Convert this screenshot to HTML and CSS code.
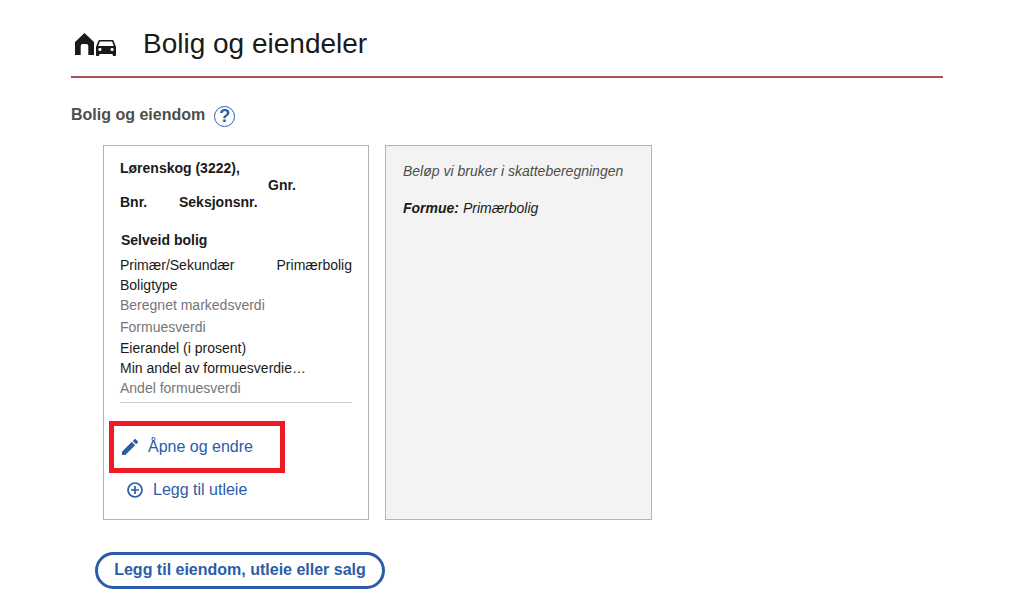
FILE: index.html
```html
<!DOCTYPE html>
<html lang="en">
<head>
    <meta charset="UTF-8">
    <title>Bolig og eiendeler</title>
    <link rel="stylesheet" href="styles.css">
</head>
<body>
    <div class="page">
        <header class="page-header">
            <div class="header-icons">
                <svg class="icon-house" viewBox="1 0 20 22" preserveAspectRatio="none"><path d="M11 0 L21 9 V22 H15 V13 Q15 11 13 11 H9 Q7 11 7 13 V22 H1 V9 Z" fill="#1a1a1a"/></svg>
                <svg class="icon-car" viewBox="3 5 18 16" preserveAspectRatio="none"><path d="M18.92 6.01C18.72 5.42 18.16 5 17.5 5h-11c-.66 0-1.21.42-1.42 1.01L3 12v8c0 .55.45 1 1 1h1c.55 0 1-.45 1-1v-1h12v1c0 .55.45 1 1 1h1c.55 0 1-.45 1-1v-8l-2.08-5.99zM6.5 16c-.83 0-1.5-.67-1.5-1.5S5.67 13 6.5 13s1.5.67 1.5 1.5S7.33 16 6.5 16zm11 0c-.83 0-1.5-.67-1.5-1.5s.67-1.5 1.5-1.5 1.5.67 1.5 1.5-.67 1.5-1.5 1.5zM5 11l1.5-4.5h11L19 11H5z" fill="#1a1a1a"/></svg>
            </div>
            <h1>Bolig og eiendeler</h1>
        </header>

        <div class="section-title">
            <h2>Bolig og eiendom</h2>
            <span class="help">?</span>
        </div>

        <div class="cards">
            <div class="card">
                <div class="address">
                    <div>Lørenskog (3222),</div>
                    <div class="gnr">Gnr.</div>
                    <div><span class="bnr">Bnr.</span>Seksjonsnr.</div>
                </div>
                <h3>Selveid bolig</h3>
                <div class="row"><span>Primær/Sekundær</span><span>Primærbolig</span></div>
                <div class="row">Boligtype</div>
                <div class="row muted">Beregnet markedsverdi</div>
                <div class="row muted tall">Formuesverdi</div>
                <div class="row">Eierandel (i prosent)</div>
                <div class="row">Min andel av formuesverdie…</div>
                <div class="row muted">Andel formuesverdi</div>
                <div class="divider"></div>
                <a class="card-link edit-link" href="#">
                    <svg class="link-icon" viewBox="3 3 18 18"><path d="M3 17.25V21h3.75L17.81 9.94l-3.75-3.75L3 17.25zM20.71 7.04a1 1 0 0 0 0-1.41l-2.34-2.34a1 1 0 0 0-1.41 0l-1.83 1.83 3.75 3.75 1.83-1.83z" fill="#2b5ca8"/></svg>
                    Åpne og endre
                </a>
                <a class="card-link add-link" href="#">
                    <svg class="link-icon" viewBox="0 0 16 16"><circle cx="8" cy="8" r="7" fill="none" stroke="#2b5ca8" stroke-width="1.7"/><path d="M8 4v8M4 8h8" stroke="#2b5ca8" stroke-width="1.7"/></svg>
                    Legg til utleie
                </a>
                <div class="highlight"></div>
            </div>
            <div class="card card-grey">
                <p class="tax-note">Beløp vi bruker i skatteberegningen</p>
                <p class="tax-value"><b>Formue:</b> Primærbolig</p>
            </div>
        </div>

        <a class="add-button" href="#">Legg til eiendom, utleie eller salg</a>
    </div>
</body>
</html>
```

FILE: styles.css
```css
body {
    margin: 0;
    font-family: "Liberation Sans", Arial, sans-serif;
    font-size: 14px;
    color: #1a1a1a;
    background: #fff;
}
.page {
    width: 872px;
    margin-left: 71px;
}
.page-header {
    display: flex;
    align-items: center;
    height: 76px;
    border-bottom: 2px solid #b0505f;
}
.header-icons {
    display: flex;
    align-items: flex-end;
    gap: 2px;
    width: 72px;
    padding-left: 4px;
    box-sizing: border-box;
    margin-top: 12px;
}
.icon-house {
    width: 19px;
    height: 22px;
}
.icon-car {
    width: 20px;
    height: 16px;
    margin-bottom: -1px;
}
h1 {
    margin: 12px 0 0;
    font-size: 28px;
    font-weight: normal;
    line-height: 34px;
}
.section-title {
    display: flex;
    align-items: center;
    gap: 9px;
    margin-top: 27px;
    height: 23px;
}
h2 {
    margin: 0 0 4px;
    font-size: 16px;
    color: #4d4d4d;
}
.help {
    width: 19px;
    height: 19px;
    border: 1.5px solid #2b5ca8;
    border-radius: 50%;
    display: flex;
    align-items: center;
    justify-content: center;
    color: #2b5ca8;
    font-size: 18px;
    font-weight: bold;
}
.cards {
    display: flex;
    gap: 16px;
    margin: 17px 0 0 32px;
}
.card {
    position: relative;
    width: 266px;
    height: 375px;
    box-sizing: border-box;
    border: 1px solid #b3b3b3;
    padding: 14px 16px 0;
}
.card-grey {
    width: 267px;
    background: #f3f3f3;
    padding: 17px 17px 0;
}
.address {
    font-weight: bold;
    line-height: 17px;
}
.gnr {
    padding-left: 148px;
}
.bnr {
    display: inline-block;
    width: 59px;
}
h3 {
    margin: 21px 0 6px 1px;
    font-size: 14px;
    line-height: 17px;
}
.row {
    display: flex;
    justify-content: space-between;
    line-height: 20px;
    white-space: nowrap;
}
.muted {
    color: #767676;
}
.tall {
    line-height: 24px;
    margin-bottom: -1px;
}
.divider {
    border-top: 1px solid #ccc;
    margin-top: 4px;
}
.card-link {
    display: flex;
    align-items: center;
    font-size: 16px;
    color: #2b5ca8;
    text-decoration: none;
    height: 18px;
}
.link-icon {
    width: 16px;
    height: 16px;
}
.edit-link {
    gap: 10px;
    margin: 35px 0 0 2px;
}
.add-link {
    gap: 10px;
    margin: 25px 0 0 7px;
}
.highlight {
    position: absolute;
    left: 5px;
    top: 275px;
    width: 176px;
    height: 52px;
    box-sizing: border-box;
    border: 5px solid #ed1c24;
}
.tax-note {
    margin: 0;
    font-style: italic;
    color: #4d4d4d;
    line-height: 17px;
}
.tax-value {
    margin: 20px 0 0;
    font-style: italic;
    line-height: 17px;
}
.add-button {
    display: flex;
    align-items: center;
    justify-content: center;
    width: 290px;
    height: 37px;
    box-sizing: border-box;
    margin: 32px 0 0 24px;
    padding-bottom: 2px;
    border: 3px solid #2b5ca8;
    border-radius: 19px;
    color: #2b5ca8;
    font-size: 16px;
    font-weight: bold;
    text-decoration: none;
}
```
